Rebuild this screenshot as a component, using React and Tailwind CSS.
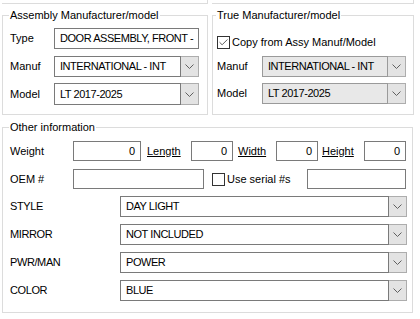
import { Check } from "lucide-react";

const Chevron = () => (
  <svg width="9" height="5" viewBox="0 0 9 5">
    <polyline points="0.5,0.5 4.5,4.5 8.5,0.5" fill="none" stroke="#606060" strokeWidth="1" />
  </svg>
);

const Combo = ({ value, className, disabled }) => (
  <div className={`flex ${className}`}>
    <div
      className={`flex-1 flex items-center pl-[5px] border tracking-[-0.45px] ${
        disabled ? "bg-[#e8e8e8] border-[#9a9a9a]" : "bg-white border-[#7a7a7a]"
      }`}
    >
      {value}
    </div>
    <div className="w-[18px] flex items-center justify-center bg-[#e3e3e3] border-y border-r border-[#adadad]">
      <Chevron />
    </div>
  </div>
);

const Box = ({ value, className }) => (
  <div className={`flex items-center bg-white border border-[#7a7a7a] ${className}`}>{value}</div>
);

const CheckBox = ({ checked }) => (
  <div className="w-[13px] h-[13px] border border-[#333] bg-white flex items-center justify-center">
    {checked && <Check size={11} strokeWidth={1.6} color="#222" />}
  </div>
);

const Group = ({ title, className, children }) => (
  <fieldset className={`border border-[#dcdcdc] ${className}`}>
    <legend className="ml-[-1px] px-[1px] leading-[16px]">{title}</legend>
    {children}
  </fieldset>
);

const App = () => {
  const lists = [
    ["STYLE", "DAY LIGHT"],
    ["MIRROR", "NOT INCLUDED"],
    ["PWR/MAN", "POWER"],
    ["COLOR", "BLUE"],
  ];

  return (
    <div className="w-[420px] h-[319px] bg-white text-black text-[11px] font-['Liberation_Sans',Arial,sans-serif] overflow-hidden">
      {/* bottom of the panels above */}
      <div className="flex h-[4px] pl-[2px] gap-[4px]">
        <div className="w-[206px] border-b border-r border-[#dcdcdc]" />
        <div className="w-[202px] border-b border-r border-[#dcdcdc]" />
      </div>

      <div className="flex pl-[2px] gap-[4px] mt-[3px]">
        <Group title="Assembly Manufacturer/model" className="w-[206px] h-[108px] px-[7px] pt-[5px]">
          <div className="flex items-center h-[21px]">
            <span className="w-[44px]">Type</span>
            <Box value="DOOR ASSEMBLY, FRONT -" className="w-[145px] h-[21px] pl-[5px] tracking-[-0.45px]" />
          </div>
          <div className="flex items-center mt-[7px]">
            <span className="w-[44px]">Manuf</span>
            <Combo value="INTERNATIONAL - INT" className="w-[145px] h-[21px]" />
          </div>
          <div className="flex items-center mt-[6px]">
            <span className="w-[44px]">Model</span>
            <Combo value="LT 2017-2025" className="w-[145px] h-[22px]" />
          </div>
        </Group>

        <Group title="True Manufacturer/model" className="w-[202px] h-[108px] pl-[4px]">
          <div className="flex items-center h-[14px] mt-[12px]">
            <CheckBox checked />
            <span className="ml-[2px]">Copy from Assy Manuf/Model</span>
          </div>
          <div className="flex items-center mt-[7px]">
            <span className="w-[45px]">Manuf</span>
            <Combo value="INTERNATIONAL - INT" className="w-[144px] h-[21px]" disabled />
          </div>
          <div className="flex items-center mt-[6px]">
            <span className="w-[45px]">Model</span>
            <Combo value="LT 2017-2025" className="w-[144px] h-[21px]" disabled />
          </div>
        </Group>
      </div>

      <Group title="Other information" className="ml-[2px] mt-[4px] w-[411px] h-[194px] pl-[7px] pt-[6px]">
        <div className="flex items-center h-[20px]">
          <span className="w-[63px]">Weight</span>
          <Box value="0" className="w-[68px] h-[20px] justify-end pr-[5px]" />
          <span className="ml-[6px] w-[44px] underline">Length</span>
          <Box value="0" className="w-[42px] h-[20px] justify-end pr-[5px]" />
          <span className="ml-[5px] w-[38px] underline">Width</span>
          <Box value="0" className="w-[42px] h-[20px] justify-end pr-[5px]" />
          <span className="ml-[4px] w-[42px] underline">Height</span>
          <Box value="0" className="w-[42px] h-[20px] justify-end pr-[5px]" />
        </div>
        <div className="flex items-center h-[20px] mt-[8px]">
          <span className="w-[63px]">OEM #</span>
          <Box value="" className="w-[131px] h-[20px]" />
          <div className="ml-[8px]">
            <CheckBox />
          </div>
          <span className="ml-[2px] w-[80px]">Use serial #s</span>
          <Box value="" className="w-[99px] h-[20px]" />
        </div>
        <div className="flex flex-col gap-[7px] mt-[7px]">
          {lists.map(([label, value]) => (
            <div key={label} className="flex items-center">
              <span className="w-[110px] tracking-[-0.4px]">{label}</span>
              <Combo value={value} className="w-[287px] h-[21px]" />
            </div>
          ))}
        </div>
      </Group>
    </div>
  );
};

export default App;
